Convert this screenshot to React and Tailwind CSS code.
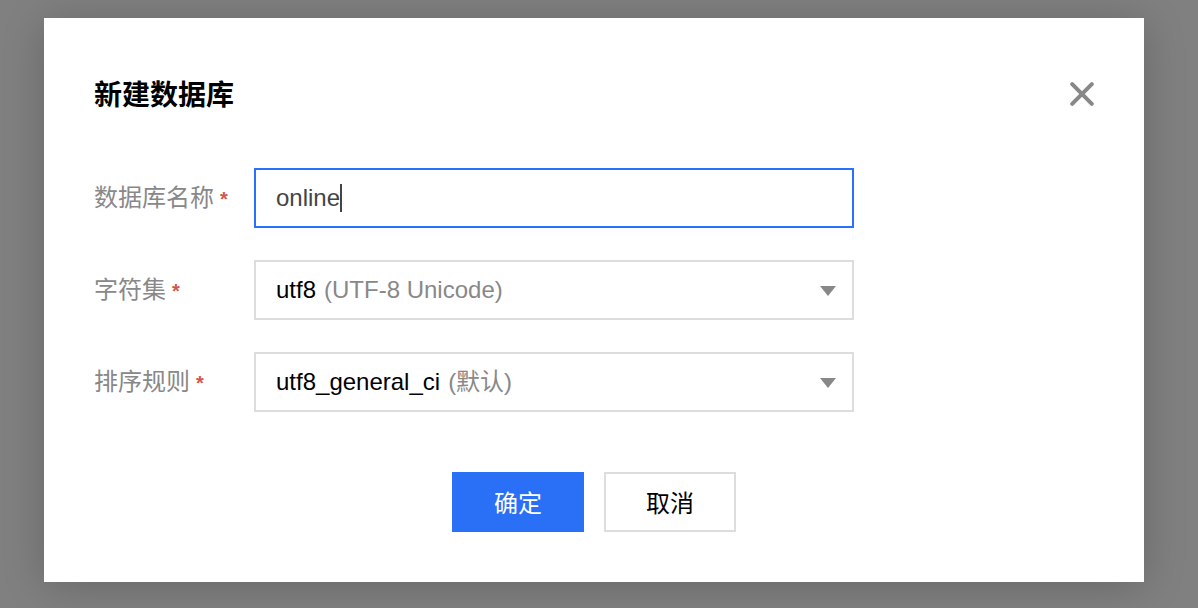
import { useState } from "react";

const charsets = [
  { value: "utf8", note: "(UTF-8 Unicode)" },
  { value: "utf8mb4", note: "(UTF-8 Unicode)" },
  { value: "latin1", note: "(cp1252 West European)" },
];

const collations = [
  { value: "utf8_general_ci", note: "(默认)" },
  { value: "utf8_bin", note: "" },
  { value: "utf8_unicode_ci", note: "" },
];

function Field({ id, label, children }) {
  return (
    <div className="flex items-center">
      <label htmlFor={id} className="flex w-40 shrink-0 items-center gap-1.5 text-[#888]">
        <span>{label}</span>
        <span className="pt-0.5 text-xl leading-8 font-bold text-[#d4554d]">*</span>
      </label>
      {children}
    </div>
  );
}

function Dropdown({ id, options }) {
  const [value, setValue] = useState(options[0].value);
  const current = options.find((option) => option.value === value);
  return (
    <div className="grid h-15 w-full max-w-150 border-2 border-[#ddd] focus-within:border-[#2970ff]">
      <div
        aria-hidden="true"
        className="col-start-1 row-start-1 flex items-center justify-between pr-4 pl-5"
      >
        <span className="flex gap-2">
          <span className="text-black">{current.value}</span>
          <span className="text-[#888]">{current.note}</span>
        </span>
        <svg width="16" height="12" viewBox="0 0 16 12" fill="#888">
          <path d="M0 2h16L8 12z" />
        </svg>
      </div>
      <select
        id={id}
        value={value}
        onChange={(event) => setValue(event.target.value)}
        className="col-start-1 row-start-1 cursor-pointer appearance-none opacity-0"
      >
        {options.map((option) => (
          <option key={option.value} value={option.value}>
            {option.value} {option.note}
          </option>
        ))}
      </select>
    </div>
  );
}

export default function App() {
  const [name, setName] = useState("online");

  return (
    <div className="min-h-screen bg-[#808080] pt-[18px] pr-[54px] pb-6 pl-11 font-['Liberation_Sans','Noto_Sans_CJK_SC',sans-serif] text-2xl">
      <div
        role="dialog"
        aria-labelledby="dialog-title"
        className="w-full bg-white p-[50px] shadow-[0_4px_40px_rgba(0,0,0,0.2)]"
      >
        <header className="mb-12 flex h-13 items-center justify-between">
          <h1 id="dialog-title" className="pt-1 text-[28px] font-bold text-black">
            新建数据库
          </h1>
          <button type="button" aria-label="关闭" className="cursor-pointer">
            <svg
              width="24"
              height="24"
              viewBox="0 0 24 24"
              stroke="#888"
              strokeWidth="4"
              strokeLinecap="round"
            >
              <path d="M2.2 2.2l19.6 19.6M21.8 2.2L2.2 21.8" />
            </svg>
          </button>
        </header>

        <form onSubmit={(event) => event.preventDefault()}>
          <div className="flex flex-col gap-8">
            <Field id="db-name" label="数据库名称">
              <div className="flex h-15 w-full max-w-150 items-center border-2 border-[#2970ff] px-5">
                <input
                  id="db-name"
                  type="text"
                  value={name}
                  onChange={(event) => setName(event.target.value)}
                  className="field-sizing-content max-w-full text-[#444] caret-transparent outline-none"
                />
                <span aria-hidden="true" className="h-7 w-0.5 shrink-0 bg-[#444]" />
              </div>
            </Field>
            <Field id="db-charset" label="字符集">
              <Dropdown id="db-charset" options={charsets} />
            </Field>
            <Field id="db-collation" label="排序规则">
              <Dropdown id="db-collation" options={collations} />
            </Field>
          </div>

          <div className="mt-15 flex justify-center gap-5">
            <button
              type="submit"
              className="h-15 w-33 cursor-pointer border-2 border-[#2970f6] bg-[#2970f6] pt-1 text-white"
            >
              确定
            </button>
            <button
              type="button"
              className="h-15 w-33 cursor-pointer border-2 border-[#ddd] bg-white pt-1 text-black"
            >
              取消
            </button>
          </div>
        </form>
      </div>
    </div>
  );
}
